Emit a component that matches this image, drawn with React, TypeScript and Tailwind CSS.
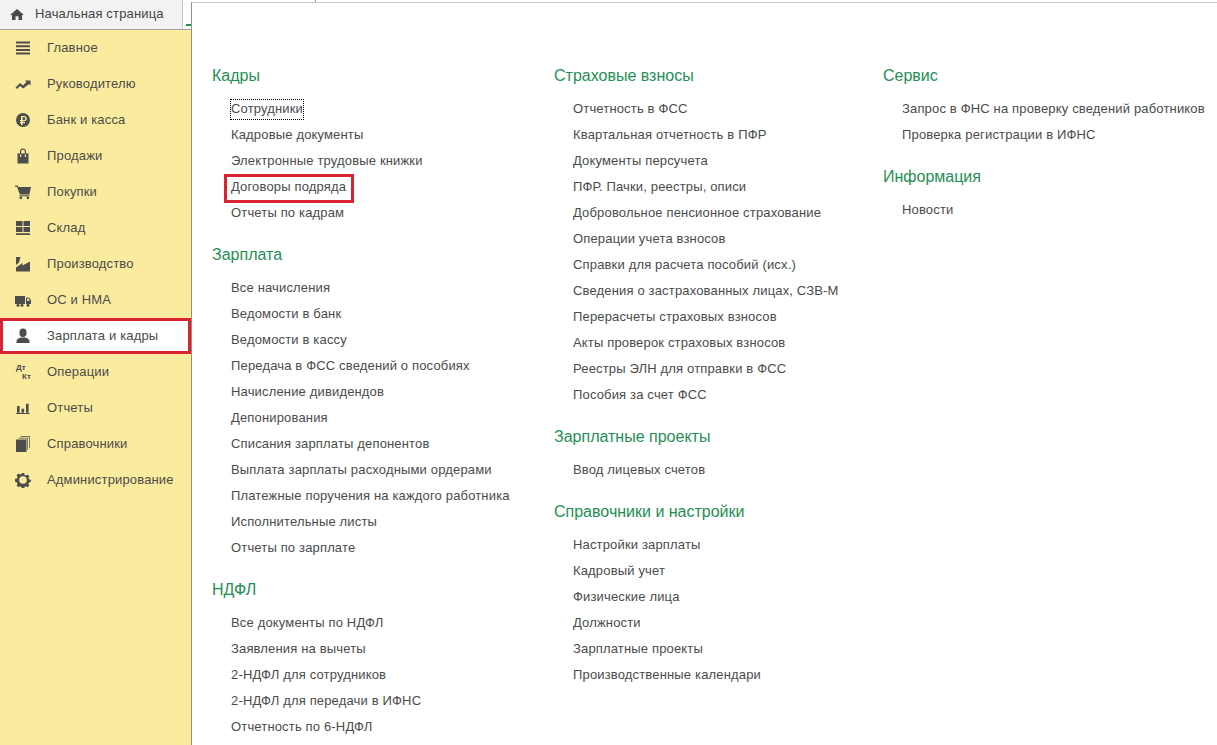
import React from 'react';

const Glyph: React.FC<{ children: React.ReactNode }> = ({ children }) => (
  <svg width="16" height="16" viewBox="0 0 16 16" fill="#4d4d4d" className="shrink-0">
    {children}
  </svg>
);

const icons: Record<string, React.ReactNode> = {
  main: (
    <Glyph>
      <path d="M1 1.500h14v2H1zM1 5.200h14v2H1zM1 8.900h14v2H1zM1 12.600h14v2H1z" />
    </Glyph>
  ),
  chart: (
    <Glyph>
      <path d="M0.500 11.500 5 7l3 2.500 3.500-3.500-1.700-1.500H15.500v5L14 8 8.200 12.500 5 10l-3 3z" />
    </Glyph>
  ),
  ruble: (
    <Glyph>
      <path
        fillRule="evenodd"
        d="M8 1a7 7 0 1 1 0 14A7 7 0 0 1 8 1zM6 4v4H5v1.200h1v.8H5v1.200h1V13h1.600v-1.800H10V10H7.600v-.8h1.600c1.600 0 2.600-1 2.600-2.600S10.800 4 9.200 4zm1.600 1.300h1.500c.8 0 1.200.5 1.200 1.300S9.900 8 9.100 8H7.600z"
      />
    </Glyph>
  ),
  bag: (
    <Glyph>
      <path
        fillRule="evenodd"
        d="M2.500 5.500h2.500V3.400C5 1.700 6.300.5 8 .5s3 1.200 3 2.900v2.100h2.500v10h-11zM6.200 4v1.500h3.600V3.400c0-1-.8-1.700-1.800-1.700s-1.800.7-1.800 1.700V4zM5 6.500V9h1.200V6.500zm4.800 0V9H11V6.500z"
      />
    </Glyph>
  ),
  cart: (
    <Glyph>
      <path d="M0 1.500h2.600l.8 1.500H16l-1.600 7.500H4.800L2 2.700H0z" />
      <path d="M4.500 11.300H14.500v1H4.500z" />
      <circle cx="5.800" cy="13.800" r="1.400" />
      <circle cx="12.800" cy="13.800" r="1.400" />
    </Glyph>
  ),
  warehouse: (
    <Glyph>
      <path d="M1 1h6.500v5H1zM8.500 1H15v5H8.500zM1 7h6.500v5H1zM8.500 7H15v5H8.500zM1 13.200h14v1.800H1z" />
    </Glyph>
  ),
  factory: (
    <Glyph>
      <path d="M1 1h4.500L4 6.500 1 9zM1 15.500V11.500L7.500 7v2.500L15 5.500v10z" />
    </Glyph>
  ),
  truck: (
    <Glyph>
      <path d="M0 4h10v8H0zM11 5.500h3L16 8v4h-5z" />
      <circle cx="3" cy="13.300" r="1.500" />
      <circle cx="7" cy="13.300" r="1.500" />
      <circle cx="13" cy="13.300" r="1.500" />
      <path d="M12 6.500v2.200h3l-1.500-2.200z" fill="#fbeb9e" />
    </Glyph>
  ),
  person: (
    <Glyph>
      <ellipse cx="8" cy="4.800" rx="3.600" ry="4.300" />
      <path d="M1.500 15v-1.800C1.500 11 4 10.200 6 9.500h4c2 .7 4.500 1.500 4.500 3.700V15z" />
    </Glyph>
  ),
  report: (
    <Glyph>
      <path d="M2 6h2.600v6.800H2zM6.500 8.700h2.600v4.100H6.500zM11 3.700h2.600v9.100H11zM1.200 13h13.400v1H1.200z" />
    </Glyph>
  ),
  books: (
    <Glyph>
      <path d="M1 3.500h10.500V16H1z" />
      <path d="M3.500 1.800H13v12h-.7V2.500H3.500zM5.500 0H15v12h-.7V.7H5.500z" />
    </Glyph>
  ),
  gear: (
    <Glyph>
      <path
        fillRule="evenodd"
        d="M6.800 1h2.400l.4 1.900 1.400.6 1.700-1 1.700 1.700-1 1.700.6 1.400 1.900.4v2.400l-1.900.4-.6 1.400 1 1.700-1.700 1.700-1.700-1-1.400.6-.4 1.900H6.800l-.4-1.900-1.400-.6-1.700 1-1.700-1.700 1-1.700-.6-1.400-1.900-.4V6.800l1.900-.4.6-1.400-1-1.700L3.300 1.600l1.700 1 1.400-.6zM8 4.200a3.800 3.800 0 1 0 0 7.600 3.800 3.800 0 0 0 0-7.600z"
      />
    </Glyph>
  ),
};

const menu: { key: string; label: string }[] = [
  { key: 'main', label: 'Главное' },
  { key: 'chart', label: 'Руководителю' },
  { key: 'ruble', label: 'Банк и касса' },
  { key: 'bag', label: 'Продажи' },
  { key: 'cart', label: 'Покупки' },
  { key: 'warehouse', label: 'Склад' },
  { key: 'factory', label: 'Производство' },
  { key: 'truck', label: 'ОС и НМА' },
  { key: 'person', label: 'Зарплата и кадры' },
  { key: 'dtkt', label: 'Операции' },
  { key: 'report', label: 'Отчеты' },
  { key: 'books', label: 'Справочники' },
  { key: 'gear', label: 'Администрирование' },
];

const columns: { title: string; links: string[] }[][] = [
  [
    {
      title: 'Кадры',
      links: ['Сотрудники', 'Кадровые документы', 'Электронные трудовые книжки', 'Договоры подряда', 'Отчеты по кадрам'],
    },
    {
      title: 'Зарплата',
      links: [
        'Все начисления',
        'Ведомости в банк',
        'Ведомости в кассу',
        'Передача в ФСС сведений о пособиях',
        'Начисление дивидендов',
        'Депонирования',
        'Списания зарплаты депонентов',
        'Выплата зарплаты расходными ордерами',
        'Платежные поручения на каждого работника',
        'Исполнительные листы',
        'Отчеты по зарплате',
      ],
    },
    {
      title: 'НДФЛ',
      links: ['Все документы по НДФЛ', 'Заявления на вычеты', '2-НДФЛ для сотрудников', '2-НДФЛ для передачи в ИФНС', 'Отчетность по 6-НДФЛ'],
    },
  ],
  [
    {
      title: 'Страховые взносы',
      links: [
        'Отчетность в ФСС',
        'Квартальная отчетность в ПФР',
        'Документы персучета',
        'ПФР. Пачки, реестры, описи',
        'Добровольное пенсионное страхование',
        'Операции учета взносов',
        'Справки для расчета пособий (исх.)',
        'Сведения о застрахованных лицах, СЗВ-М',
        'Перерасчеты страховых взносов',
        'Акты проверок страховых взносов',
        'Реестры ЭЛН для отправки в ФСС',
        'Пособия за счет ФСС',
      ],
    },
    { title: 'Зарплатные проекты', links: ['Ввод лицевых счетов'] },
    {
      title: 'Справочники и настройки',
      links: ['Настройки зарплаты', 'Кадровый учет', 'Физические лица', 'Должности', 'Зарплатные проекты', 'Производственные календари'],
    },
  ],
  [
    { title: 'Сервис', links: ['Запрос в ФНС на проверку сведений работников', 'Проверка регистрации в ИФНС'] },
    { title: 'Информация', links: ['Новости'] },
  ],
];

const NavLink: React.FC<{ label: string }> = ({ label }) => {
  if (label === 'Сотрудники') {
    return (
      <div className="flex h-[26px] items-start pt-[3px]">
        <span className="-ml-px border border-dotted border-black pb-px leading-[18px]">{label}</span>
      </div>
    );
  }
  if (label === 'Договоры подряда') {
    return (
      <div className="flex h-[26px] items-start">
        <span className="-ml-[7px] border-[3px] border-[#d9232e] pr-[5px] pb-[3px] pl-[4px] leading-[20px]">{label}</span>
      </div>
    );
  }
  return <div className="flex h-[26px] items-center whitespace-nowrap">{label}</div>;
};

export default function App() {
  return (
    <div className="flex h-[745px] w-[1217px] flex-col overflow-hidden bg-white font-['Liberation_Sans',Arial,sans-serif] text-[13px] tracking-[0.16px] text-[#4b4b4b]">
      <div className="relative flex h-[30px] shrink-0 border-b border-[#a3a3a3] bg-white">
        <div className="flex w-[183px] items-center gap-[11px] border-r border-[#c8c8c8] bg-[#f2f2f2] pb-px pl-[10px] text-[#444]">
          <svg width="14" height="11" viewBox="0 0 16 13" fill="#4a4a4a" preserveAspectRatio="none">
            <path d="M8 0 16 7h-2.200v6H9.700V8.500H6.300V13H2.200V7H0z" />
          </svg>
          <span>Начальная страница</span>
        </div>
        <div className="mt-auto mb-[3px] ml-[3px] h-[2px] w-[5px] bg-[#1f8f55]" />
        <div className="ml-[124px] h-[3px] w-px bg-[#a3a3a3]" />
      </div>

      <div className="-mt-[28px] flex min-h-0 flex-1">
        <aside className="mt-[28px] w-[191px] shrink-0 bg-[#fbeb9e]">
          {menu.map((item) =>
            item.key === 'person' ? (
              <div
                key={item.key}
                className="flex h-[36px] items-center gap-[16px] border-[3px] border-[#d9232e] bg-white pl-[12px]"
              >
                {icons[item.key]}
                <span>{item.label}</span>
              </div>
            ) : (
              <div key={item.key} className="flex h-[36px] items-center gap-[16px] pl-[15px]">
                {item.key === 'dtkt' ? (
                  <span className="flex w-4 shrink-0 flex-col pl-px text-[8px] leading-[9px] font-bold tracking-normal text-[#4d4d4d]">
                    <span>Дт</span>
                    <span className="pl-[6px]">Кт</span>
                  </span>
                ) : (
                  icons[item.key]
                )}
                <span>{item.label}</span>
              </div>
            ),
          )}
        </aside>

        <main className="relative flex min-w-0 flex-1 border-t border-l border-t-[#c8c8c8] border-l-[#9a9170] bg-white pt-[61px] pl-[20px]">
          {columns.map((sections, i) => (
            <div key={i} className={i === 0 ? 'w-[342px] shrink-0' : i === 1 ? 'w-[329px] shrink-0' : 'shrink-0'}>
              {sections.map((section) => (
                <section key={section.title} className="mb-[17px]">
                  <h2 className="mb-2 flex h-6 items-center text-[16px] tracking-normal text-[#1f8f55]">{section.title}</h2>
                  <div className="pl-[19px]">
                    {section.links.map((link) => (
                      <NavLink key={link} label={link} />
                    ))}
                  </div>
                </section>
              ))}
            </div>
          ))}
        </main>
      </div>
    </div>
  );
}
